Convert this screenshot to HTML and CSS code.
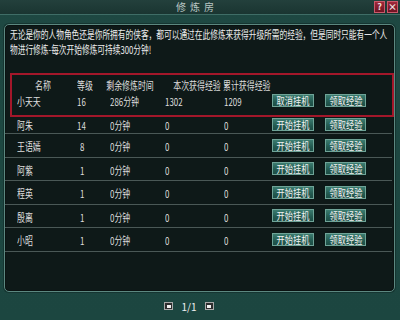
FILE: index.html
```html
<!DOCTYPE html>
<html>
<head>
  <meta charset="UTF-8">
  <title>修炼房</title>
  <link rel="stylesheet" href="styles.css">
</head>
<body>
  <div class="win">
    <div class="titlebar">
      <span></span>
      <span class="title">修炼房</span>
      <div class="tools">
        <span class="tbtn">?</span>
        <span class="tbtn">×</span>
      </div>
    </div>

    <div class="panel">
      <p class="intro">
        <span class="t">无论是你的人物角色还是你所拥有的侠客，都可以通过在此修炼来获得升级所需的经验，但是同时只能有一个人</span><br>
        <span class="t">物进行修炼-每次开始修炼可持续300分钟!</span>
      </p>

      <div class="hl">
        <div class="row head">
          <div><span class="t">名称</span></div>
          <div><span class="t">等级</span></div>
          <div><span class="t">剩余修炼时间</span></div>
          <div><span class="t">本次获得经验</span></div>
          <div class="left"><span class="t">累计获得经验</span></div>
        </div>
        <div class="row first">
          <div class="c1"><span class="t">小天天</span></div>
          <div class="c2"><span class="t">16</span></div>
          <div class="c3"><span class="t">286分钟</span></div>
          <div class="c4"><span class="t">1302</span></div>
          <div class="c5"><span class="t">1209</span></div>
          <div><span class="btn"><span class="t">取消挂机</span></span></div>
          <div><span class="btn"><span class="t">领取经验</span></span></div>
        </div>
      </div>

      <div class="row short">
        <div class="c1"><span class="t">阿朱</span></div>
        <div class="c2"><span class="t">14</span></div>
        <div class="c3"><span class="t">0分钟</span></div>
        <div class="c4"><span class="t">0</span></div>
        <div class="c5"><span class="t">0</span></div>
        <div><span class="btn"><span class="t">开始挂机</span></span></div>
        <div><span class="btn"><span class="t">领取经验</span></span></div>
      </div>
      <div class="row">
        <div class="c1"><span class="t">王语嫣</span></div>
        <div class="c2"><span class="t">8</span></div>
        <div class="c3"><span class="t">0分钟</span></div>
        <div class="c4"><span class="t">0</span></div>
        <div class="c5"><span class="t">0</span></div>
        <div><span class="btn"><span class="t">开始挂机</span></span></div>
        <div><span class="btn"><span class="t">领取经验</span></span></div>
      </div>
      <div class="row">
        <div class="c1"><span class="t">阿紫</span></div>
        <div class="c2"><span class="t">1</span></div>
        <div class="c3"><span class="t">0分钟</span></div>
        <div class="c4"><span class="t">0</span></div>
        <div class="c5"><span class="t">0</span></div>
        <div><span class="btn"><span class="t">开始挂机</span></span></div>
        <div><span class="btn"><span class="t">领取经验</span></span></div>
      </div>
      <div class="row">
        <div class="c1"><span class="t">程英</span></div>
        <div class="c2"><span class="t">1</span></div>
        <div class="c3"><span class="t">0分钟</span></div>
        <div class="c4"><span class="t">0</span></div>
        <div class="c5"><span class="t">0</span></div>
        <div><span class="btn"><span class="t">开始挂机</span></span></div>
        <div><span class="btn"><span class="t">领取经验</span></span></div>
      </div>
      <div class="row">
        <div class="c1"><span class="t">殷离</span></div>
        <div class="c2"><span class="t">1</span></div>
        <div class="c3"><span class="t">0分钟</span></div>
        <div class="c4"><span class="t">0</span></div>
        <div class="c5"><span class="t">0</span></div>
        <div><span class="btn"><span class="t">开始挂机</span></span></div>
        <div><span class="btn"><span class="t">领取经验</span></span></div>
      </div>
      <div class="row">
        <div class="c1"><span class="t">小昭</span></div>
        <div class="c2"><span class="t">1</span></div>
        <div class="c3"><span class="t">0分钟</span></div>
        <div class="c4"><span class="t">0</span></div>
        <div class="c5"><span class="t">0</span></div>
        <div><span class="btn"><span class="t">开始挂机</span></span></div>
        <div><span class="btn"><span class="t">领取经验</span></span></div>
      </div>
    </div>

    <div class="pager">
      <span class="pbtn"></span>
      <span class="pnum">1/1</span>
      <span class="pbtn"></span>
    </div>
  </div>
</body>
</html>
```

FILE: styles.css
```css
html, body { margin: 0; overflow: hidden; background: #1d4540; }
body {
  font-family: "Noto Sans CJK SC", "DejaVu Sans", sans-serif;
  font-size: 11px;
  color: #e2e2e2;
}
.win {
  width: 400px;
  height: 320px;
  overflow: hidden;
  background: linear-gradient(#1e4842, #1c4640);
  display: flex;
  flex-direction: column;
}

/* squeezed glyphs, like the game's bitmap font */
.t {
  display: inline-block;
  white-space: nowrap;
  transform: scaleX(.72);
  transform-origin: left center;
}

.titlebar {
  height: 14px;
  display: grid;
  grid-template-columns: 1fr auto 1fr;
  align-items: center;
  background: linear-gradient(#23403c, #1a3531);
  border-bottom: 1px solid #3f6d66;
}
.title {
  font-size: 10px;
  letter-spacing: 4px;
  color: #b9c6c3;
  padding-right: 6px;
  line-height: 14px;
}
.tools {
  justify-self: end;
  display: flex;
  gap: 2px;
  margin-right: 2px;
}
.tbtn {
  width: 9px;
  height: 10px;
  background: linear-gradient(#a0283a, #6e1222);
  border: 1px solid #c9596a;
  color: #f0e0e0;
  font-size: 9px;
  font-weight: bold;
  line-height: 10px;
  text-align: center;
}

.panel {
  margin: 9px 5px 0 4px;
  height: 266px;
  background: #0e1918;
  border: 1px solid #5c8880;
  border-radius: 5px;
  box-shadow: inset 0 0 0 1px #0a1211, 0 0 0 1px #153531;
}
.intro {
  margin: 2px 0 0 5px;
  line-height: 15px;
  color: #ececec;
}
.intro .t { transform: scaleX(.70); }

.hl {
  margin: 18px 2px 0 7px;
  outline: 2px solid #a3172a;
}
.row {
  display: grid;
  grid-template-columns: 62px 22px 68px 52px 55px 53px 43px;
  align-items: center;
  height: 22.5px;
  margin-right: 2px;
  padding-left: 7px;
  border-bottom: 1px solid #4a5856;
}
.hl .row { padding-left: 0; margin-right: 0; border-bottom: 0; }
.row.head { height: 14px; color: #d0d0d0; }
.head > div { text-align: center; }
.head .t { transform-origin: center; }
.head > .left { text-align: left; padding-left: 7px; }
.head > .left .t { transform-origin: left center; }
.row.first { height: 22px; padding-bottom: 4px; }
.row.short { height: 18px; }

.row > div { padding-top: 2px; color: #dedede; }
.c1 { padding-left: 5px; }
.c2 { text-align: center; padding-right: 3px; }
.c3 { padding-left: 14px; }
.c4 { padding-left: 1px; }
.c5 { padding-left: 8px; }

.btn {
  width: 42px;
  height: 13px;
  display: flex;
  justify-content: center;
  align-items: center;
  margin-top: -2px;
  background: linear-gradient(#3f8174, #235a50 60%, #1b4a42);
  border: 1px solid #0b1a18;
  box-shadow: inset 0 0 0 1px #6fa397;
  color: #f2f2f2;
  font-size: 10.5px;
  line-height: 13px;
}
.btn .t { transform: scaleX(.78); transform-origin: center; }
.row > div:last-child .btn { width: 41px; }

.pager {
  flex: 1;
  display: flex;
  align-items: center;
  justify-content: center;
  padding-right: 22px;
}
.pbtn {
  width: 7px;
  height: 6px;
  background: #2e2e2e;
  border: 1px solid #a8a8a8;
  display: flex;
  align-items: center;
  justify-content: center;
}
.pbtn::after {
  content: "";
  width: 4px;
  height: 3px;
  background: #f2f2f2;
}
.pnum {
  margin: 0 8px;
  font-size: 10px;
  color: #f0f0f0;
}
```
